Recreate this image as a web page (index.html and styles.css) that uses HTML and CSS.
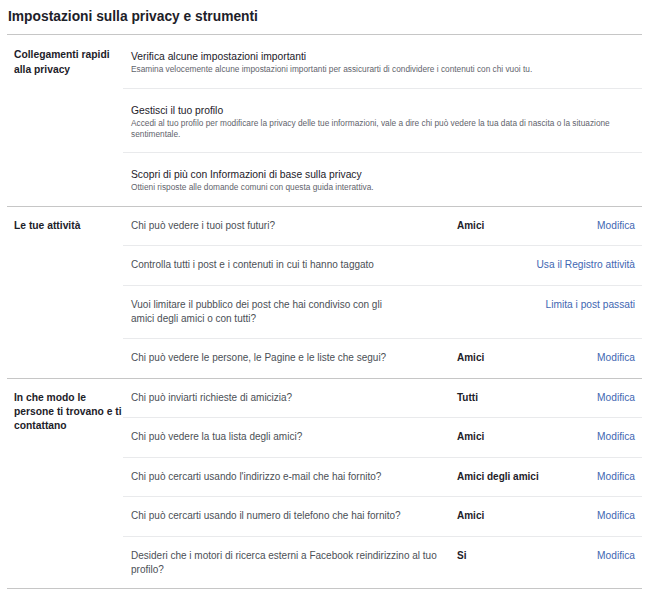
FILE: index.html
```html
<!DOCTYPE html>
<html lang="it">
<head>
<meta charset="utf-8">
<title>Impostazioni sulla privacy e strumenti</title>
<link rel="stylesheet" href="styles.css">
</head>
<body>
<div class="page">
  <h1 class="title">Impostazioni sulla privacy e strumenti</h1>

  <section class="sec">
    <div class="sec-label sec-label--quick">Collegamenti rapidi alla privacy</div>
    <ul class="rows">
      <li class="link-row">
        <div class="link-title">Verifica alcune impostazioni importanti</div>
        <div class="link-sub">Esamina velocemente alcune impostazioni importanti per assicurarti di condividere i contenuti con chi vuoi tu.</div>
      </li>
      <li class="link-row">
        <div class="link-title">Gestisci il tuo profilo</div>
        <div class="link-sub">Accedi al tuo profilo per modificare la privacy delle tue informazioni, vale a dire chi può vedere la tua data di nascita o la situazione sentimentale.</div>
      </li>
      <li class="link-row">
        <div class="link-title">Scopri di più con Informazioni di base sulla privacy</div>
        <div class="link-sub">Ottieni risposte alle domande comuni con questa guida interattiva.</div>
      </li>
    </ul>
  </section>

  <section class="sec">
    <div class="sec-label">Le tue attività</div>
    <ul class="rows">
      <li class="row">
        <div class="row-label">Chi può vedere i tuoi post futuri?</div>
        <div class="row-value">Amici</div>
        <a class="row-link" href="#">Modifica</a>
      </li>
      <li class="row">
        <div class="row-label">Controlla tutti i post e i contenuti in cui ti hanno taggato</div>
        <div class="row-value"></div>
        <a class="row-link" href="#">Usa il Registro attività</a>
      </li>
      <li class="row">
        <div class="row-label row-label--narrow">Vuoi limitare il pubblico dei post che hai condiviso con gli amici degli amici o con tutti?</div>
        <div class="row-value"></div>
        <a class="row-link" href="#">Limita i post passati</a>
      </li>
      <li class="row">
        <div class="row-label">Chi può vedere le persone, le Pagine e le liste che segui?</div>
        <div class="row-value">Amici</div>
        <a class="row-link" href="#">Modifica</a>
      </li>
    </ul>
  </section>

  <section class="sec">
    <div class="sec-label sec-label--tight">In che modo le persone ti trovano e ti contattano</div>
    <ul class="rows">
      <li class="row">
        <div class="row-label">Chi può inviarti richieste di amicizia?</div>
        <div class="row-value">Tutti</div>
        <a class="row-link" href="#">Modifica</a>
      </li>
      <li class="row">
        <div class="row-label">Chi può vedere la tua lista degli amici?</div>
        <div class="row-value">Amici</div>
        <a class="row-link" href="#">Modifica</a>
      </li>
      <li class="row">
        <div class="row-label">Chi può cercarti usando l'indirizzo e-mail che hai fornito?</div>
        <div class="row-value">Amici degli amici</div>
        <a class="row-link" href="#">Modifica</a>
      </li>
      <li class="row">
        <div class="row-label">Chi può cercarti usando il numero di telefono che hai fornito?</div>
        <div class="row-value">Amici</div>
        <a class="row-link" href="#">Modifica</a>
      </li>
      <li class="row row--last">
        <div class="row-label">Desideri che i motori di ricerca esterni a Facebook reindirizzino al tuo profilo?</div>
        <div class="row-value">Si</div>
        <a class="row-link" href="#">Modifica</a>
      </li>
    </ul>
  </section>
</div>
</body>
</html>
```

FILE: styles.css
```css
* {
  box-sizing: border-box;
}

html, body {
  margin: 0;
  padding: 0;
  background: #ffffff;
}

body {
  font-family: "Liberation Sans", Arial, sans-serif;
  color: #1d2129;
}

.page {
  width: 635px;
  margin-left: 7px;
}

.title {
  margin: 0;
  padding: 8px 0 9px 1px;
  font-size: 13.8px;
  line-height: 17px;
  font-weight: bold;
  color: #1d2129;
  border-bottom: 1px solid #c6c6c6;
}

.sec {
  display: flex;
  border-bottom: 1px solid #c6c6c6;
}

.sec-label {
  flex: 0 0 116px;
  padding: 12.5px 0 0 7px;
  font-size: 10.3px;
  line-height: 14px;
  font-weight: bold;
  color: #1d2129;
}

.sec-label--quick {
  padding-top: 12px;
  line-height: 15px;
}

.sec-label--tight {
  padding-top: 12px;
}

.rows {
  flex: 1;
  list-style: none;
  margin: 0;
  padding: 0;
}

.rows > li + li {
  border-top: 1px solid #e9eaec;
}

.link-row {
  padding: 14px 7px 12.5px 8px;
}

.link-title {
  font-size: 10.3px;
  line-height: 15px;
  color: #1d2129;
}

.link-sub {
  font-size: 8.3px;
  line-height: 11px;
  color: #5f646c;
}

.row {
  display: grid;
  grid-template-columns: 317px 1fr auto;
  column-gap: 9px;
  align-items: start;
  padding: 12.25px 7px 12.25px 8px;
  font-size: 10px;
  line-height: 14px;
}

.row--last {
  padding-bottom: 11px;
}

.row-label {
  color: #4b4f56;
}

.row-label--narrow {
  max-width: 265px;
}

.row-value {
  font-weight: bold;
  color: #1d2129;
}

.row-link {
  font-size: 10.2px;
  color: #4267b2;
  text-decoration: none;
  text-align: right;
}
```
